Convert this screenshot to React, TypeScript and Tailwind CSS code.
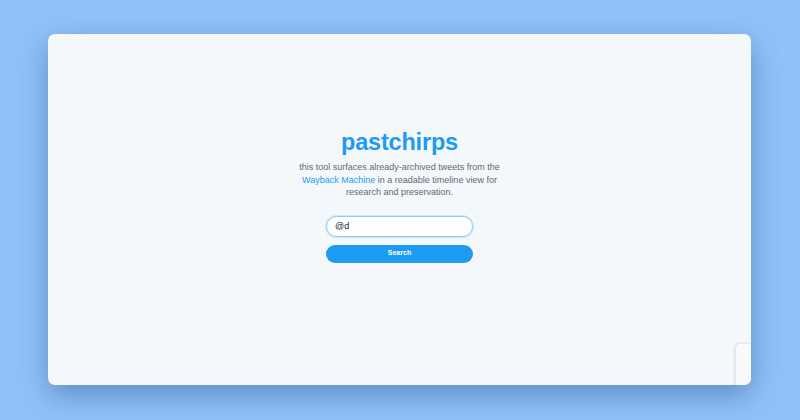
import { useState } from "react";

export default function App() {
  const [handle, setHandle] = useState("@d");

  return (
    <div className="w-[800px] h-[420px] bg-[#91c3f8] pt-[34px] pl-[48px] overflow-hidden font-['Liberation_Sans',Arial,sans-serif]">
      <div className="relative w-[703px] h-[351px] rounded-[7px] bg-[#f5f8fa] shadow-[0_10px_30px_rgba(30,70,130,0.45)] overflow-hidden">
        <div className="flex flex-col items-center pt-[94px]">
          <h1 className="text-[23.5px] leading-[28px] font-bold text-[#1d9bf0] tracking-[-0.2px]">
            pastchirps
          </h1>
          <p className="mt-[5px] w-[210px] text-center text-[9px] leading-[12.5px] text-[#5b6b78]">
            this tool surfaces already-archived tweets from the{" "}
            <a href="#" className="text-[#1d9bf0]">
              Wayback Machine
            </a>{" "}
            in a readable timeline view for research and preservation.
          </p>
          <form
            className="mt-[17px] flex flex-col gap-[8px] w-[147px]"
            onSubmit={(e) => e.preventDefault()}
          >
            <input
              value={handle}
              onChange={(e) => setHandle(e.target.value)}
              className="h-[21px] w-full rounded-full bg-white border border-[#8fcbf4] px-[8px] text-[9px] text-[#14171a] outline-none shadow-[0_0_0_1px_rgba(143,203,244,0.35)]"
            />
            <button
              type="submit"
              className="h-[18px] w-full rounded-full bg-[#1d9bf0] text-white text-[7px] font-bold"
            >
              Search
            </button>
          </form>
        </div>
        <div className="absolute right-0 top-[309px] w-[16px] h-[50px] rounded-tl-[5px] bg-[#f9fafb] border-l border-t border-[#e3e6e9] shadow-[-1px_0_3px_rgba(0,0,0,0.08)]" />
      </div>
    </div>
  );
}
